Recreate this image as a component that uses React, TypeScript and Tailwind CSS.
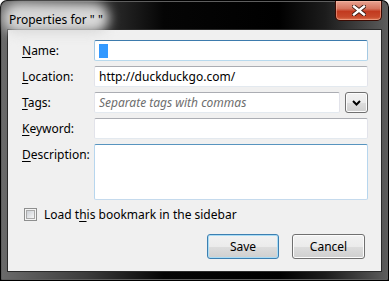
import React from 'react';

const font = { fontFamily: '"Noto Sans", "Open Sans", sans-serif' };

function Label({ k, rest }: { k: string; rest: string }) {
  return (
    <span className="text-[12px] text-black">
      <span className="underline underline-offset-2">{k}</span>
      {rest}
    </span>
  );
}

const boxNormal =
  'border border-t-[#abadb3] border-x-[#e2e3ea] border-b-[#e3e9ef] bg-white rounded-[2px]';
const boxFocus =
  'border border-t-[#3d7bad] border-x-[#a4c9e3] border-b-[#b7d9ed] bg-white rounded-[2px]';
const boxHover =
  'border border-t-[#5794bf] border-x-[#b7d6ee] border-b-[#c5daed] bg-white rounded-[2px]';

function CloseButton() {
  return (
    <div className="flex h-[20px] w-[47px] items-center justify-center rounded-b-[5px] border border-t-0 border-[#3a0a02] bg-[linear-gradient(180deg,#e8a392_0%,#d5755f_40%,#c23a1f_55%,#c84a2c_85%,#e07a55_100%)] shadow-[inset_0_0_0_1px_rgba(255,200,180,0.45)]">
      <svg width="14" height="11" viewBox="0 0 14 11">
        <path
          d="M2 1.5 L12 9.5 M12 1.5 L2 9.5"
          stroke="#3a1a12"
          strokeWidth="4.2"
          strokeLinecap="square"
        />
        <path
          d="M2 1.5 L12 9.5 M12 1.5 L2 9.5"
          stroke="#ffffff"
          strokeWidth="2.4"
          strokeLinecap="square"
        />
      </svg>
    </div>
  );
}

function Button({ children, primary }: { children: React.ReactNode; primary?: boolean }) {
  return (
    <div
      className={`flex h-[25px] items-center justify-center rounded-[3px] border text-[12px] text-black ${
        primary
          ? 'w-[72px] border-[#3c7fb1] shadow-[inset_0_0_0_1px_#a9dcf5]'
          : 'w-[73px] border-[#707070] shadow-[inset_0_0_0_1px_#fcfcfc]'
      } bg-[linear-gradient(180deg,#f2f2f2_0%,#ebebeb_50%,#dddddd_51%,#cfcfcf_100%)]`}
    >
      {children}
    </div>
  );
}

export default function App() {
  return (
    <div style={font} className="h-[281px] w-[389px] overflow-hidden rounded-t-[7px] bg-black p-px">
      <div className="flex h-full flex-col rounded-t-[6px] border border-[#5e5e5e] bg-[linear-gradient(90deg,#6a6a6a_0%,#3c3c3c_22%,#050505_42%,#000_72%,#1c1c1c_84%,#5c5c5c_100%)]">
        {/* title bar */}
        <div className="flex h-[27px] shrink-0 items-start justify-between">
          <div className="relative ml-[7px] mt-[4px]">
            <div className="absolute -inset-x-[6px] -inset-y-[3px] rounded-full bg-[#d8d8d8] blur-[6px]" />
            <span className="relative text-[12px] text-black">Properties for " "</span>
          </div>
          <div className="-mt-px mr-[5px]">
            <CloseButton />
          </div>
        </div>

        {/* body */}
        <div className="mx-[5px] mb-[7px] flex-1 border border-[#2a2a2a] bg-[#f0f0f0] pl-[14px] pr-[13px] pt-[10px]">
          <div className="grid grid-cols-[72px_1fr] gap-y-[5px]">
            <div className="flex h-[21px] items-center">
              <Label k="N" rest="ame:" />
            </div>
            <div className={`flex h-[21px] items-center pl-[4px] ${boxFocus}`}>
              <span className="h-[14px] w-[9px] bg-[#3399ff]" />
            </div>

            <div className="flex h-[21px] items-center">
              <Label k="L" rest="ocation:" />
            </div>
            <div className={`flex h-[21px] items-center pl-[4px] text-[12px] text-black ${boxNormal}`}>
              http://duckduckgo.com/
            </div>

            <div className="flex h-[21px] items-center">
              <Label k="T" rest="ags:" />
            </div>
            <div className="flex h-[21px] gap-[5px]">
              <div className={`flex flex-1 items-center pl-[4px] text-[12px] italic text-[#6d6d6d] ${boxNormal}`}>
                Separate tags with commas
              </div>
              <div className="flex w-[23px] items-center justify-center rounded-[3px] border border-[#707070] bg-[linear-gradient(180deg,#f2f2f2_0%,#ebebeb_50%,#dddddd_51%,#cfcfcf_100%)] shadow-[inset_0_0_0_1px_#fcfcfc]">
                <svg width="9" height="6" viewBox="0 0 9 6">
                  <path d="M1 1 L4.5 4.5 L8 1" stroke="#000" strokeWidth="2" fill="none" />
                </svg>
              </div>
            </div>

            <div className="flex h-[21px] items-center">
              <Label k="K" rest="eyword:" />
            </div>
            <div className={`h-[21px] ${boxNormal}`} />

            <div className="flex h-[21px] items-center self-start">
              <Label k="D" rest="escription:" />
            </div>
            <div className={`h-[56px] ${boxHover}`} />
          </div>

          <div className="mt-[8px] flex h-[13px] items-center gap-[7px] pl-[2px]">
            <div className="flex h-[13px] w-[13px] items-center justify-center border border-[#8e8f8f] bg-[#f4f4f4]">
              <div className="h-[9px] w-[9px] border border-[#a9a9a9] bg-[linear-gradient(135deg,#cbcfd5_0%,#f6f6f6_100%)]" />
            </div>
            <span className="text-[12px] leading-[13px] text-black">
              Load t<span className="underline underline-offset-2">h</span>is bookmark in the sidebar
            </span>
          </div>

          <div className="mt-[13px] flex justify-end gap-[13px] pr-[3px]">
            <Button primary>Save</Button>
            <Button>Cancel</Button>
          </div>
        </div>
      </div>
    </div>
  );
}
